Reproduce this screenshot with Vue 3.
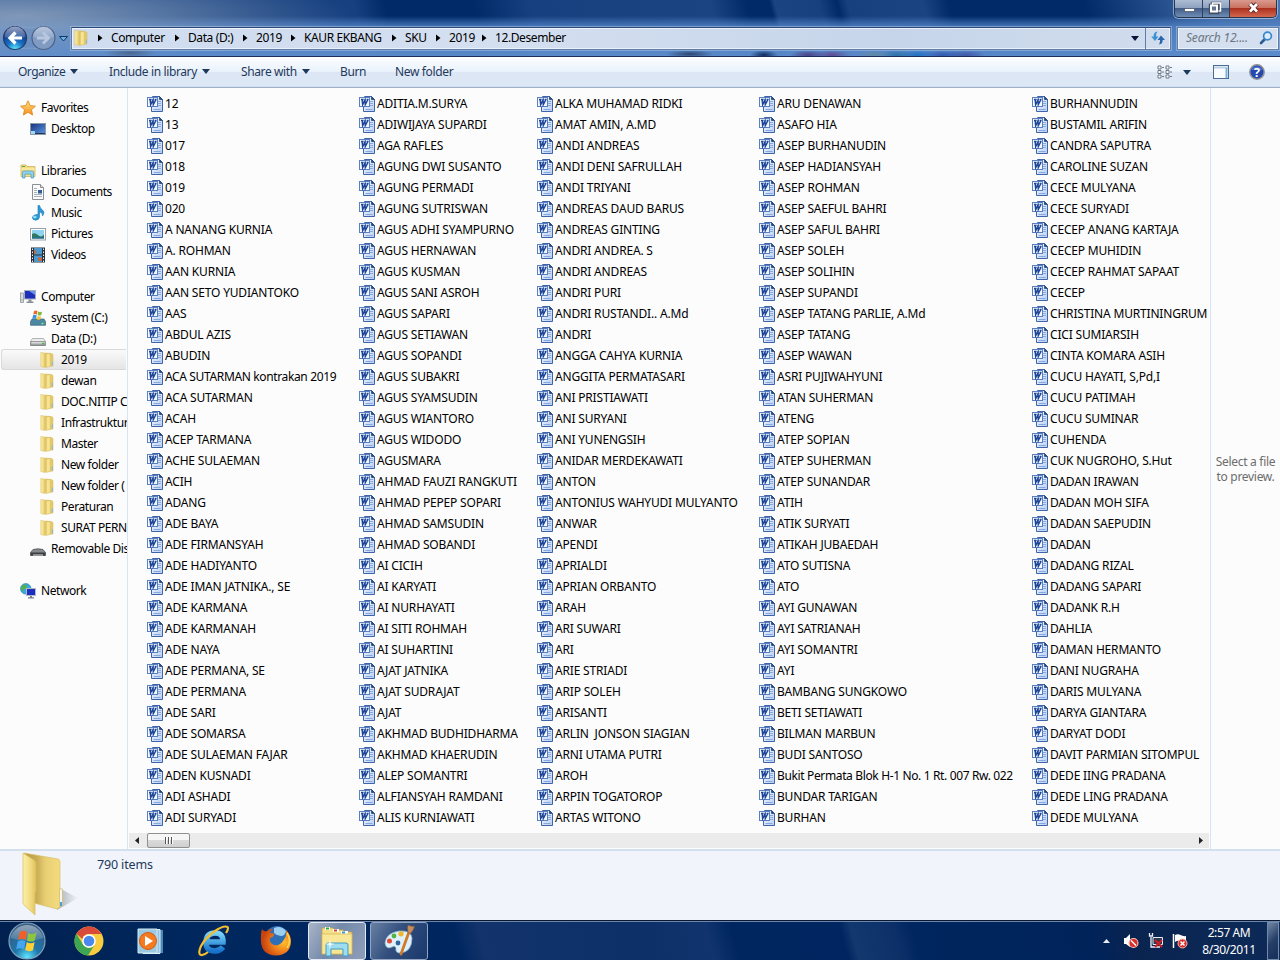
<script setup>
const columns = [
  ['12','13','017','018','019','020','A NANANG KURNIA','A. ROHMAN','AAN KURNIA','AAN SETO YUDIANTOKO','AAS','ABDUL AZIS','ABUDIN','ACA SUTARMAN kontrakan 2019','ACA SUTARMAN','ACAH','ACEP TARMANA','ACHE SULAEMAN','ACIH','ADANG','ADE BAYA','ADE FIRMANSYAH','ADE HADIYANTO','ADE IMAN JATNIKA., SE','ADE KARMANA','ADE KARMANAH','ADE NAYA','ADE PERMANA, SE','ADE PERMANA','ADE SARI','ADE SOMARSA','ADE SULAEMAN FAJAR','ADEN KUSNADI','ADI ASHADI','ADI SURYADI'],
  ['ADITIA.M.SURYA','ADIWIJAYA SUPARDI','AGA RAFLES','AGUNG DWI SUSANTO','AGUNG PERMADI','AGUNG SUTRISWAN','AGUS ADHI SYAMPURNO','AGUS HERNAWAN','AGUS KUSMAN','AGUS SANI ASROH','AGUS SAPARI','AGUS SETIAWAN','AGUS SOPANDI','AGUS SUBAKRI','AGUS SYAMSUDIN','AGUS WIANTORO','AGUS WIDODO','AGUSMARA','AHMAD FAUZI RANGKUTI','AHMAD PEPEP SOPARI','AHMAD SAMSUDIN','AHMAD SOBANDI','AI CICIH','AI KARYATI','AI NURHAYATI','AI SITI ROHMAH','AI SUHARTINI','AJAT JATNIKA','AJAT SUDRAJAT','AJAT','AKHMAD BUDHIDHARMA','AKHMAD KHAERUDIN','ALEP SOMANTRI','ALFIANSYAH RAMDANI','ALIS KURNIAWATI'],
  ['ALKA MUHAMAD RIDKI','AMAT AMIN, A.MD','ANDI ANDREAS','ANDI DENI SAFRULLAH','ANDI TRIYANI','ANDREAS DAUD BARUS','ANDREAS GINTING','ANDRI ANDREA. S','ANDRI ANDREAS','ANDRI PURI','ANDRI RUSTANDI.. A.Md','ANDRI','ANGGA CAHYA KURNIA','ANGGITA PERMATASARI','ANI PRISTIAWATI','ANI SURYANI','ANI YUNENGSIH','ANIDAR MERDEKAWATI','ANTON','ANTONIUS WAHYUDI MULYANTO','ANWAR','APENDI','APRIALDI','APRIAN ORBANTO','ARAH','ARI SUWARI','ARI','ARIE STRIADI','ARIP SOLEH','ARISANTI','ARLIN  JONSON SIAGIAN','ARNI UTAMA PUTRI','AROH','ARPIN TOGATOROP','ARTAS WITONO'],
  ['ARU DENAWAN','ASAFO HIA','ASEP BURHANUDIN','ASEP HADIANSYAH','ASEP ROHMAN','ASEP SAEFUL BAHRI','ASEP SAFUL BAHRI','ASEP SOLEH','ASEP SOLIHIN','ASEP SUPANDI','ASEP TATANG PARLIE, A.Md','ASEP TATANG','ASEP WAWAN','ASRI PUJIWAHYUNI','ATAN SUHERMAN','ATENG','ATEP SOPIAN','ATEP SUHERMAN','ATEP SUNANDAR','ATIH','ATIK SURYATI','ATIKAH JUBAEDAH','ATO SUTISNA','ATO','AYI GUNAWAN','AYI SATRIANAH','AYI SOMANTRI','AYI','BAMBANG SUNGKOWO','BETI SETIAWATI','BILMAN MARBUN','BUDI SANTOSO','Bukit Permata Blok H-1 No. 1 Rt. 007 Rw. 022','BUNDAR TARIGAN','BURHAN'],
  ['BURHANNUDIN','BUSTAMIL ARIFIN','CANDRA SAPUTRA','CAROLINE SUZAN','CECE MULYANA','CECE SURYADI','CECEP ANANG KARTAJA','CECEP MUHIDIN','CECEP RAHMAT SAPAAT','CECEP','CHRISTINA MURTININGRUM','CICI SUMIARSIH','CINTA KOMARA ASIH','CUCU HAYATI, S,Pd,I','CUCU PATIMAH','CUCU SUMINAR','CUHENDA','CUK NUGROHO, S.Hut','DADAN IRAWAN','DADAN MOH SIFA','DADAN SAEPUDIN','DADAN','DADANG RIZAL','DADANG SAPARI','DADANK R.H','DAHLIA','DAMAN HERMANTO','DANI NUGRAHA','DARIS MULYANA','DARYA GIANTARA','DARYAT DODI','DAVIT PARMIAN SITOMPUL','DEDE IING PRADANA','DEDE LING PRADANA','DEDE MULYANA'],
]
const tree = [
  [0, 'star', 'Favorites'], [1, 'desktop', 'Desktop'], null,
  [0, 'library', 'Libraries'], [1, 'doc', 'Documents'], [1, 'music', 'Music'], [1, 'picture', 'Pictures'], [1, 'video', 'Videos'], null,
  [0, 'computer', 'Computer'], [1, 'sysdrive', 'system (C:)'], [1, 'drive', 'Data (D:)'],
  [2, 'folder', '2019'], [2, 'folder', 'dewan'], [2, 'folder', 'DOC.NITIP C'], [2, 'folder', 'Infrastruktur'], [2, 'folder', 'Master'], [2, 'folder', 'New folder'], [2, 'folder', 'New folder ('], [2, 'folder', 'Peraturan'], [2, 'folder', 'SURAT PERN'],
  [1, 'removable', 'Removable Dis'], null, [0, 'network', 'Network'],
]
const crumbs = [['Computer', 77], ['Data (D:)', 68], ['2019', 48], ['KAUR EKBANG', 101], ['SKU', 44], ['2019', 46], ['12.Desember', 90]]
const tight = (name) => /[a-z]{3}/.test(name)
</script>

<template>
  <div class="screen">
    <svg class="defs" width="0" height="0" aria-hidden="true">
      <defs>
        <linearGradient id="gFold" x1="0" x2="1"><stop offset="0" stop-color="#fbf0a8"/><stop offset=".5" stop-color="#f3de86"/><stop offset="1" stop-color="#e0c25c"/></linearGradient>
        <linearGradient id="gBack" x1="0" x2="1"><stop offset="0" stop-color="#b99a3f"/><stop offset=".35" stop-color="#c9ac55"/><stop offset=".6" stop-color="#e9cf74"/><stop offset="1" stop-color="#f3dc7d"/></linearGradient>
        <linearGradient id="gBlue" x1="0" y1="0" x2="1" y2="1"><stop offset="0" stop-color="#16307a"/><stop offset="1" stop-color="#5d9be8"/></linearGradient>
        <linearGradient id="gGray" x1="0" y1="0" x2="0" y2="1"><stop offset="0" stop-color="#f2f2f2"/><stop offset="1" stop-color="#8c8f93"/></linearGradient>
        <linearGradient id="gPage" x1="0" y1="0" x2="1" y2="1"><stop offset="0" stop-color="#fff"/><stop offset="1" stop-color="#b5cdf3"/></linearGradient>
        <linearGradient id="gStar" x1="0" y1="0" x2="0" y2="1"><stop offset="0" stop-color="#ffe680"/><stop offset="1" stop-color="#f58a1f"/></linearGradient>
        <radialGradient id="gNav" cx=".5" cy="1" r=".8"><stop offset="0" stop-color="#5ff0ff"/><stop offset=".45" stop-color="#1971c4"/><stop offset="1" stop-color="#12347f"/></radialGradient>
        <linearGradient id="gShine" x1="0" y1="0" x2="0" y2="1"><stop offset="0" stop-color="#fff" stop-opacity=".75"/><stop offset="1" stop-color="#fff" stop-opacity=".2"/></linearGradient>
        <radialGradient id="gOrb" cx=".5" cy=".95" r=".85"><stop offset="0" stop-color="#5fe6ff"/><stop offset=".4" stop-color="#1d76ab"/><stop offset="1" stop-color="#385c82"/></radialGradient>
        <linearGradient id="gIe" x1="0" y1="0" x2="0" y2="1"><stop offset="0" stop-color="#79d2f8"/><stop offset="1" stop-color="#1673cc"/></linearGradient>
        <radialGradient id="gFox" cx=".75" cy=".5" r=".7"><stop offset="0" stop-color="#ffc02e"/><stop offset=".5" stop-color="#f07f1c"/><stop offset="1" stop-color="#c8430f"/></radialGradient>
      </defs>
      <symbol id="word" viewBox="0 0 16 16">
        <path d="M5.500.5h7l3 3v12h-11v-12z" fill="url(#gPage)" stroke="#3d64a8"/><path d="M12.500.5v3h3z" fill="#27487f" stroke="#27487f" stroke-width=".8"/>
        <path d="M11 5.500h3M11 7.500h3M11 9.500h3M6.500 13.500h7" stroke="#86a8df"/>
        <rect x=".5" y="1.500" width="10" height="9" fill="#f4f8ff" stroke="#5b80c2"/>
        <path d="M2 3.500h2.600M5.300 3.500h1.600M7.600 3.500h2M3.200 4l.5 4.600L6 4l.3 4.600L8.700 4" fill="none" stroke="#1e4697" stroke-width="1.500"/>
      </symbol>
      <symbol id="folder" viewBox="0 0 16 16">
        <path d="M5.500 1l6 .6 1.500 1v11.500l-7.500.5z" fill="#e6ca6a" stroke="#d4b75a" stroke-width=".5"/>
        <path d="M.8.500L5.300 1.200v14.300l-4.500-1z" fill="url(#gFold)" stroke="#dcc36c" stroke-width=".6"/>
        <path d="M6.300 2l4-.6v13l-4 1z" fill="#f6e493" stroke="#d4b75a" stroke-width=".5"/><path d="M12.300 9.500v4" stroke="#8fb9cc" stroke-width="1.200"/>
      </symbol>
      <symbol id="star" viewBox="0 0 16 16"><path d="M8 .8l2.200 4.800 5.200.6-3.900 3.500 1.100 5.300L8 12.300 3.400 15l1.100-5.300L.6 6.200l5.200-.6z" fill="url(#gStar)" stroke="#e08a1e" stroke-width=".9"/></symbol>
      <symbol id="desktop" viewBox="0 0 16 16"><rect x=".5" y="2.500" width="15" height="11" fill="url(#gBlue)" stroke="#8d98a8"/><path d="M1 12.500h14" stroke="#26374f"/><path d="M1 10h4v3H1z" fill="#9ad9f4"/></symbol>
      <symbol id="library" viewBox="0 0 16 16"><path d="M1 2h5l1 1.500h8v10H1z" fill="#f3dd83" stroke="#c9a951" stroke-width=".7"/><path d="M2 3.500h3" stroke="#4fae47"/><path d="M1 6h14" stroke="#fff3b3"/><path d="M2.500 15V9.500q0-1.500 1.500-1.500h8q1.500 0 1.500 1.500V15H11v-4H5v4z" fill="#8fd4ef" stroke="#4695be" stroke-width=".7"/></symbol>
      <symbol id="doc" viewBox="0 0 16 16"><path d="M2.500.5h8l3 3v12h-11z" fill="#fafafa" stroke="#8a8f96"/><path d="M10.500.5v3h3" fill="#ddd" stroke="#8a8f96"/><path d="M4 4.500h3M4 6.500h3M4 8.500h3M4 10.500h8M4 12.500h8" stroke="#a5b1bf"/><path d="M8 6h4v3.500H8z" fill="#2e5d96"/></symbol>
      <symbol id="music" viewBox="0 0 16 16"><path d="M8 .5h1.500q.5 3 3 4.500 3 2.500 0 6 .5-3.500-3-4v5q-.5 3.200-4 3.200-3.500-.5-3-3.200 1-2.800 5.500-2.500z" fill="#2a9bd8" stroke="#1c75b3" stroke-width=".6"/><ellipse cx="4.800" cy="12" rx="1.800" ry="1.200" fill="#8bdcf8"/></symbol>
      <symbol id="picture" viewBox="0 0 16 16"><rect x=".5" y="2.500" width="15" height="11.500" fill="#fff" stroke="#9aa0a8"/><path d="M2 4h12v8.500H2z" fill="#8fd2f1"/><path d="M2 8q3-2 6 1t6-.5v4H2z" fill="#2f7a5c"/><path d="M2 11h12v1.500H2z" fill="#2a6d94"/></symbol>
      <symbol id="video" viewBox="0 0 16 16"><rect x="1" y=".5" width="14" height="15" fill="#28313b"/><rect x="4" y="1" width="8" height="6.500" fill="#4a98ce"/><rect x="4" y="8.500" width="8" height="6.500" fill="#4a98ce"/><path d="M4 3l3 1.500L5 7H4zM8 10l4 1v3H8z" fill="#c26a43"/><path d="M2.500 1.500v14M13.500 1.500v14" stroke="#eee" stroke-dasharray="1.500 1.500"/></symbol>
      <symbol id="computer" viewBox="0 0 16 16"><rect x=".5" y="4" width="3" height="9.500" fill="#d5dae0" stroke="#838a92" stroke-width=".7"/><path d="M1.500 11h1" stroke="#48b648"/><rect x="4.500" y="1.500" width="11" height="8.500" fill="#1d2fb8" stroke="#a9adba"/><path d="M9 2h6v4z" fill="#6d8ff0"/><path d="M8.500 10.500h3v2h2v1.500h-7v-1.500h2z" fill="#8a9099"/></symbol>
      <symbol id="drive" viewBox="0 0 16 16"><path d="M2.500 7.500h11l2 3v4H.5v-4z" fill="#ececec" stroke="#a0a3a7" stroke-width=".8"/><path d="M.8 10.500h14.400v3.900H.8z" fill="url(#gGray)" stroke="#777" stroke-width=".7"/><path d="M12 12.500h2" stroke="#39c23d" stroke-width="1.500"/></symbol>
      <symbol id="sysdrive" viewBox="0 0 16 16"><path d="M2 9h12l1.500 2.500v3.800H.5v-3.800z" fill="#4b86a3" stroke="#466779" stroke-width=".7"/><path d="M11.500 13.500h2" stroke="#7ef36f" stroke-width="1.500"/><path d="M4 1q2-1 3.500 0L7 4.500Q5 3.600 3.300 4.500z" fill="#ea6b2d"/><path d="M8.200 1.500q1.800 1 3.800 0L11.300 5q-2 1-3.600 0z" fill="#7fba3a"/><path d="M3 5.300q2-.9 3.700 0L6 9Q4 8 2.300 9z" fill="#3b93db"/><path d="M7.500 5.900q2 1 3.600 0l-.7 3.300q-2 1-3.600 0z" fill="#f8c62f"/></symbol>
      <symbol id="removable" viewBox="0 0 16 16"><path d="M3 8.500q5-1.500 10 0l2.500 3v3H.5v-3z" fill="#85888c" stroke="#444" stroke-width=".7"/><path d="M.8 11.500h14.400v3H.8z" fill="#3b3e42"/><path d="M3 14h10" stroke="#ddd"/></symbol>
      <symbol id="network" viewBox="0 0 16 16"><circle cx="5.800" cy="5.800" r="5.300" fill="#3ba7dc" stroke="#2379a9" stroke-width=".6"/><path d="M3 1.800q4-1 4 1.200T4 6.500 3.800 10Q1 8 .8 5z" fill="#52b04f"/><rect x="6.500" y="5.500" width="9" height="7" fill="#1c2fc0" stroke="#b5bac7"/><path d="M10 13h2v1.300h2V15.500H8v-1.200h2z" fill="#7b8088"/></symbol>
      <symbol id="flag" viewBox="0 0 20 20"><path d="M4 2.500q3.500-2 6 .2L9 9Q6 7.200 2.500 9z" fill="#f0602a"/><path d="M11 3.300q3.500 1.700 7-.3L16.500 9.500q-3.500 2-6.500 0z" fill="#8cc63e"/><path d="M2.300 10.200q3.500-1.800 6.500 0L7.500 17Q4.500 15.200 1 17z" fill="#45a5ee"/><path d="M9.800 10.900q3 2 6.500.1L15 17.700q-3.500 1.700-6.500-.1z" fill="#ffd035"/></symbol>
    </svg>

    <header class="glass">
      <div class="caption">
        <div class="winbtns">
          <span class="wb min"><svg width="28" height="17" viewBox="0 0 28 17"><rect x="9.500" y="8.500" width="10" height="3" fill="#fff" stroke="#4c5a70" stroke-width=".8"/></svg></span>
          <span class="wb max"><svg width="26" height="17" viewBox="0 0 26 17"><path d="M9.500 3.500h7v7h-7z" fill="none" stroke="#414e63" stroke-width="3.400"/><path d="M7.500 5.500h7v7h-7z" fill="none" stroke="#414e63" stroke-width="3.400"/><path d="M9.500 5V3h8v8h-2" fill="none" stroke="#fff" stroke-width="1.500"/><path d="M8 5.500h6v6H8z" fill="#65758f" stroke="#fff" stroke-width="2"/></svg></span>
          <span class="wb close"><svg width="47" height="17" viewBox="0 0 47 17"><path d="M20 3.800l7 8M27 3.800l-7 8" stroke="#5e2420" stroke-width="4.600"/><path d="M20 4l7 7.600M27 4l-7 7.600" stroke="#fff" stroke-width="2.800"/></svg></span>
        </div>
      </div>
      <div class="addrrow">
        <svg class="nav" width="70" height="28" viewBox="0 0 70 28">
          <path d="M15 2q14 4 28 0a12 12 0 0 1 0 24q-14-4-28 0z" fill="#6c8dbd" fill-opacity=".5" stroke="#8ba5cc" stroke-width=".7"/>
          <circle cx="15" cy="14" r="11.500" fill="url(#gNav)" stroke="#243c6b" stroke-width="1.200"/><path d="M4.500 13a10.500 10.500 0 0 1 21 0q-10 3-21 0z" fill="url(#gShine)" opacity=".75"/>
          <path d="M15.500 8.500L10 14l5.500 5.500M10.500 14H22" fill="none" stroke="#fff" stroke-width="3.200"/>
          <circle cx="43.500" cy="14" r="11.500" fill="#809bc2" stroke="#4a6087" stroke-width="1.200"/><path d="M33 13a10.500 10.500 0 0 1 21 0q-10 3-21 0z" fill="url(#gShine)" opacity=".6"/>
          <path d="M43 8.500l5.500 5.500-5.500 5.500M48 14H37" fill="none" stroke="#b9c7de" stroke-width="2.800"/>
          <path d="M59.500 12.500h8L63.500 17z" fill="#69b2e6" stroke="#123764"/>
        </svg>
        <div class="address">
          <svg class="i16" width="16" height="16"><use href="#folder"/></svg>
          <div class="crumbs">
            <span v-for="(c, i) in crumbs" :key="i" class="crumb" :style="{ width: c[1] + 'px' }"><svg width="5" height="8"><path d="M0 .5L4.500 4 0 7.500z" fill="#000"/></svg>{{ c[0] }}</span>
          </div>
          <svg class="drop" width="8" height="5"><path d="M0 0h8L4 5z" fill="#0b1438"/></svg>
          <span class="refresh"><svg width="16" height="16" viewBox="0 0 16 16"><path d="M7.500 1.500Q3.200 2 3.700 6.500H1.200L5 11l3.500-4.500H6.200Q5.800 3.500 7.500 1.500z" fill="#3b93d6"/><path d="M9 14.500q4-.5 3.600-4.500H15l-4-4.500L7.500 10H10q.4 2.500-1 4.500z" fill="#2b66b2"/></svg></span>
        </div>
        <div class="search"><span>Search 12....</span><svg width="14" height="14" viewBox="0 0 14 14"><path d="M6 8L2 12" stroke="#2c5c93" stroke-width="2.600" stroke-linecap="round"/><circle cx="8.500" cy="5" r="3.900" fill="#dcecfb" stroke="#3a86c8" stroke-width="1.700"/></svg></div>
      </div>
    </header>

    <div class="toolbar">
      <span class="t t1">Organize <svg width="8" height="5"><path d="M0 0h8L4 5z"/></svg></span>
      <span class="t t2">Include in library <svg width="8" height="5"><path d="M0 0h8L4 5z"/></svg></span>
      <span class="t t3">Share with <svg width="8" height="5"><path d="M0 0h8L4 5z"/></svg></span>
      <span class="t t4">Burn</span>
      <span class="t t5">New folder</span>
      <div class="tools">
        <svg width="16" height="14" viewBox="0 0 16 14"><g fill="#fff" stroke="#5f6b7c" stroke-width=".9"><path d="M1 1h3v3H1zM1 5.500h3v3H1zM1 10h3v3H1zM9 1h3v3H9zM9 5.500h3v3H9zM9 10h3v3H9z"/><path d="M5 2.500h2M5 7h2M5 11.500h2M13 2.500h2M13 7h2M13 11.500h2"/></g></svg>
        <svg class="vd" width="8" height="5"><path d="M0 0h8L4 5z" fill="#1e395b"/></svg>
        <svg class="pane" width="16" height="14" viewBox="0 0 16 14"><rect x=".5" y=".5" width="15" height="13" fill="#f9fcff" stroke="#4d6c91"/><path d="M1 2.500h14" stroke="#bdd1e6" stroke-width="2"/><path d="M13.500 3v10" stroke="#79b4d8" stroke-width="2"/></svg>
        <svg class="help" width="16" height="16" viewBox="0 0 16 16"><circle cx="8" cy="8" r="7.200" fill="#2348ae" stroke="#8f9399" stroke-width="1.500"/><path d="M2.500 6a6 6 0 0 1 11 0z" fill="#6e91de" opacity=".6"/><text x="8" y="12.500" text-anchor="middle" font-size="12.500" font-weight="700" fill="#fff">?</text></svg>
      </div>
    </div>

    <main class="body">
      <nav class="side">
        <div v-for="(n, i) in tree" :key="i" class="node" :class="[n ? 'lv' + n[0] : 'gap', { sel: i === 12 }]">
          <template v-if="n"><svg class="i16" width="16" height="16"><use :href="'#' + n[1]"/></svg><span>{{ n[2] }}</span></template>
        </div>
      </nav>
      <section class="files">
        <div class="grid">
          <div v-for="(col, c) in columns" :key="c" class="col">
            <div v-for="f in col" :key="f" class="file" :class="{ tight: tight(f) }"><svg class="i16" width="16" height="16"><use href="#word"/></svg><span>{{ f }}</span></div>
          </div>
        </div>
        <div class="scroll">
          <svg width="4" height="7"><path d="M4 0v7L0 3.500z" fill="#222"/></svg>
          <div class="thumb"><i></i><i></i><i></i></div>
          <svg class="rt" width="4" height="7"><path d="M0 0v7l4-3.500z" fill="#222"/></svg>
        </div>
      </section>
      <aside class="preview">Select a file<br>to preview.</aside>
    </main>

    <footer class="details">
      <svg width="62" height="66" viewBox="0 0 62 66">
        <defs><linearGradient id="gSh" x1="0" x2="1"><stop offset="0" stop-color="#777b85" stop-opacity=".6"/><stop offset="1" stop-color="#777b85" stop-opacity="0"/></linearGradient></defs>
        <path d="M39 36l19 10-21 12z" fill="url(#gSh)"/>
        <path d="M4 1l34 6q2 .5 2 3v45l-3 2-23-6z" fill="url(#gBack)" stroke="#d8be66" stroke-width=".7"/>
        <path d="M39.500 37h3v17h-3z" fill="#f5f5ee" stroke="#cfb45b" stroke-width=".6"/><path d="M41 50v4" stroke="#48a0dd" stroke-width="2"/>
        <path d="M3 1l11 7q2 1 2 4v27l-1 2v22L4 53q-1-1-1-3z" fill="url(#gFold)" stroke="#d8bd62" stroke-width=".7"/>
      </svg>
      <span>790 items</span>
    </footer>

    <div class="taskbar">
      <svg class="orb" width="40" height="40" viewBox="0 0 40 40"><circle cx="20" cy="20" r="18" fill="url(#gOrb)" stroke="#7da2bd" stroke-width="1.200"/><path d="M3.500 17a17 17 0 0 1 33 0q-16 6-33 0z" fill="url(#gShine)" opacity=".6"/><use href="#flag" x="8" y="8" width="24" height="24"/></svg>
      <svg class="chrome" width="30" height="30" viewBox="0 0 30 30"><circle cx="15" cy="15" r="14.500" fill="#f9cc3f"/><path d="M2.500 7.700A14.500 14.500 0 0 1 27.600 8H15a7 7 0 0 0-6.700 5z" fill="#d94a3b"/><path d="M2.500 7.700A14.500 14.500 0 0 0 14 29.500L20.500 19a7 7 0 0 1-11.800-1z" fill="#3da652"/><circle cx="15" cy="15" r="6.800" fill="#fff"/><circle cx="15" cy="15" r="5.300" fill="#4a87ee"/></svg>
      <svg class="wmp" width="28" height="28" viewBox="0 0 28 28"><path d="M8 3h18v23H8z" fill="#4d88b5"/><path d="M6 2.500h17v24H6z" fill="#92c4df" stroke="#e1f3fb"/><path d="M1 2h19v24H1z" fill="#9bc9e2" stroke="#d4ecf7"/><circle cx="11" cy="14" r="8.500" fill="#f47b20" stroke="#d45c12"/><path d="M8 9l8 5-8 5z" fill="#fff"/></svg>
      <svg class="ie" width="34" height="32" viewBox="0 0 34 32"><path d="M11 17h15Q26.500 8 18 8T9 17t9 9q5 0 8-4" fill="none" stroke="url(#gIe)" stroke-width="5.500"/><path d="M29 8q3-4.500 1.500-6Q27 0 18 6T4 21q-3.500 8 0 9 3 .5 7-3" fill="none" stroke="#f3bd2f" stroke-width="2.200"/></svg>
      <svg class="fox" width="32" height="32" viewBox="0 0 32 32"><circle cx="17" cy="13" r="12" fill="#2f6fb5"/><path d="M14 3q7-3 12 3-1 5-5 5T14 8z" fill="#9ccff0"/><path d="M2 4q1 2 4 2.500Q9 3.500 13 4q-3 2-3 4 3 0 4.500 1-1 3-4.500 4-1 5 4 7 6 1 9-4 4-5 3-11 5 5 5 12Q30 30 16 30.500 2 30 1 17 .5 9 2 4z" fill="url(#gFox)"/><path d="M27 8q5 8 0 15" fill="none" stroke="#ffd44f" stroke-width="1.500"/></svg>
      <div class="task on"><svg width="34" height="32" viewBox="0 0 34 32"><path d="M2 6V3h11l1 2h9l1 2h8v22H2z" fill="#f4de86" stroke="#c0a14a" stroke-width=".8"/><path d="M5 3.500h5M13 5.500h6M21 7.500h7" stroke="#fff" stroke-width="3"/><path d="M6 3.500h3" stroke="#2ca83d" stroke-width="2"/><path d="M14 5.500h3" stroke="#d13e2b" stroke-width="2"/><path d="M22 7.500h3" stroke="#3496d8" stroke-width="2"/><path d="M2 9h30v20H2z" fill="#f7e796" stroke="#d2b558" stroke-width=".7"/><path d="M6 31V20q0-2 2-2h18q2 0 2 2v11h-5v-7H11v7z" fill="#9edcf0" stroke="#3e9dc4"/><path d="M10 14l.7 4.300L15 19l-4.300.7L10 24l-.7-4.300L5 19l4.300-.7z" fill="#fff"/></svg></div>
      <div class="task"><svg width="34" height="34" viewBox="0 0 34 34"><path d="M3 19Q4 9 17 7q12-1 13 7 0 14-12 15-5 0-4-5-1-3-4-1Q4 26 3 19z" fill="#dff1fa" stroke="#86b4ce" stroke-width=".8"/><circle cx="7.500" cy="17" r="2.500" fill="#e34a39"/><circle cx="12" cy="12" r="2.400" fill="#54b247"/><circle cx="19" cy="9.800" r="2.600" fill="#f1b52a"/><circle cx="16" cy="19" r="2.400" fill="#2e639b"/><path d="M27 8L19 30" stroke="#d07a2c" stroke-width="2.800" stroke-linecap="round"/><path d="M26 8.500q-1-5 0-7.500 3 1.500 6.500 1.500-1 4-4 7z" fill="#c28d62" stroke="#8a5526" stroke-width=".5"/></svg></div>
      <div class="tray">
        <svg width="7" height="4"><path d="M0 4h7L3.500 0z" fill="#e8edf5"/></svg>
        <svg class="snd" width="16" height="16" viewBox="0 0 16 16"><path d="M1 5h2l4-4v13l-4-3H1z" fill="#fff"/><circle cx="10.500" cy="10" r="4.500" fill="#d92d27" stroke="#f6c0bb" stroke-width="1.100"/><path d="M8 7.500l5 5" stroke="#fff" stroke-width="1.400"/></svg>
        <svg class="net" width="16" height="16" viewBox="0 0 16 16"><path d="M5 4.500h9.500v7H5z" fill="#2b3950" stroke="#e8edf3"/><path d="M1.500 0v3h3V0M1 3h4M3 4v10h9" fill="none" stroke="#eef2f8" stroke-width="1.300"/><path d="M7 7l7 7M14 7l-7 7" stroke="#cf1b24" stroke-width="2"/></svg>
        <svg class="act" width="16" height="16" viewBox="0 0 16 16"><path d="M1.500 1v14" stroke="#fff" stroke-width="1.500"/><path d="M3 2q3-1.500 5.500 0T14 3v6q-3 1-5.500-.5T3 9z" fill="#fff"/><circle cx="10.500" cy="10.500" r="4.500" fill="#d92d27" stroke="#f3b8b4"/><path d="M8.500 8.500l4 4M12.500 8.500l-4 4" stroke="#fff" stroke-width="1.500"/></svg>
        <div class="clock">2:57 AM<br>8/30/2011</div>
        <div class="peek"></div>
      </div>
    </div>
  </div>
</template>

<style>
html, body { margin: 0; overflow: hidden; }
</style>
<style scoped>
.screen { width: 1280px; height: 960px; display: flex; flex-direction: column; overflow: hidden; font: 12px/16px "Noto Sans", "Open Sans", sans-serif; color: #000; background: #fcfcfc; }
.defs { position: absolute; }
.i16 { flex: none; display: block; }
.glass { height: 57px; flex: none; box-sizing: border-box; border-bottom: 1px solid #1d2f57;
  background:
    radial-gradient(ellipse 14px 5px at 764px 55px, #0d2a5c, transparent),
    radial-gradient(ellipse 24px 4px at 690px 54px, #2d456e, transparent),
    radial-gradient(ellipse 18px 5px at 808px 55px, #4c4086, transparent),
    radial-gradient(ellipse 18px 5px at 832px 55px, #5e4a92, transparent),
    radial-gradient(ellipse 18px 5px at 874px 55px, #6089a4, transparent),
    radial-gradient(ellipse 18px 5px at 897px 55px, #2a72a8, transparent),
    radial-gradient(ellipse 18px 5px at 918px 55px, #1f71c4, transparent),
    radial-gradient(ellipse 22px 5px at 943px 55px, #3157b0, transparent),
    radial-gradient(ellipse 20px 5px at 966px 55px, #4057a8, transparent),
    radial-gradient(ellipse 26px 5px at 130px 53px, #4a668f, transparent),
    radial-gradient(ellipse 330px 46px at 20px 16px, rgba(150,170,195,.8), rgba(120,150,190,0)),
    linear-gradient(180deg, rgba(80,130,200,0) 16px, rgba(83,132,199,.85) 27px, rgba(93,141,205,.95) 56px),
    linear-gradient(75deg, #2a5390 0, #1b4482 250px, #174080 355px, #002a68 385px, #002a68 470px, #174080 525px, #1b4482 700px, #002a68 735px, #002a68 757px, #1b4482 762px, #17407f 805px, #002a68 822px, #17407f 832px, #1b4482 905px, #002a68 930px, #002a68 1060px, #3c66a2 1180px, #4a74ae 1250px); }
.caption { height: 24px; display: flex; justify-content: flex-end; padding-right: 3px; }
.winbtns { height: 17px; display: flex; border: 1px solid #26364f; border-top: 0; border-radius: 0 0 5px 5px; overflow: hidden; box-shadow: 0 0 0 1px rgba(190,210,235,.65); }
.wb { height: 17px; box-sizing: border-box; border-right: 1px solid #31415a; background: linear-gradient(#adbdd3 0, #8ca1c0 8px, #405b86 8px, #6f8db4 17px); }
.wb svg { display: block; }
.min { width: 28px; } .max { width: 27px; }
.close { width: 46px; border: 0; background: linear-gradient(#d99a8e 0, #c9705f 8px, #aa2e1d 8px, #d4674f 17px); }
.addrrow { height: 28px; display: flex; align-items: center; }
.nav { flex: none; }
.address { width: 1100px; height: 23px; box-sizing: border-box; border: 1px solid #5f7da9; border-top-color: #2c4877; margin-left: 1px; display: flex; align-items: center; background: linear-gradient(90deg, #cfdcef, #d4dff0 40%, #c6d5ea 75%, #d1dded); box-shadow: inset 0 0 0 1px rgba(255,255,255,.6), 0 0 0 1px rgba(190,208,233,.45); padding-left: 2px; flex: none; }
.crumbs { display: flex; flex: 1; margin-left: 8px; letter-spacing: -.4px; }
.crumb { display: flex; align-items: center; white-space: nowrap; flex: none; }
.crumb svg { margin-right: 8px; flex: none; }
.drop { margin-right: 6px; }
.refresh { width: 24px; height: 21px; border-left: 1px solid #5f7da9; display: flex; align-items: center; justify-content: center; }
.search { width: 102px; height: 23px; box-sizing: border-box; margin: 0 0 0 6px; border: 1px solid #5f7da9; background: #d4dfef; box-shadow: inset 0 0 0 1px rgba(255,255,255,.6), 0 0 0 1px rgba(190,208,233,.45); display: flex; align-items: center; justify-content: space-between; padding: 0 5px 0 8px; font-style: italic; color: #6d7681; white-space: nowrap; letter-spacing: -.2px; }
.toolbar { height: 31px; flex: none; box-sizing: border-box; border-bottom: 1px solid #a0afc8; border-top: 1px solid #fff; background: linear-gradient(#fbfdff 0, #e8f1fb 14px, #dce6f4 14px, #dde8f6 28px, #c9d5e6 29px); display: flex; align-items: center; color: #1e395b; padding: 0 0 1px 18px; }
.t { white-space: nowrap; flex: none; letter-spacing: -.38px; }
.t svg { margin: 0 0 2px 2px; fill: #1e395b; }
.t1 { width: 91px; letter-spacing: -.5px; } .t2 { width: 132px; } .t3 { width: 99px; } .t4 { width: 55px; } .t5 { letter-spacing: -.35px; }
.tools { margin-left: auto; display: flex; align-items: center; padding-right: 15px; }
.vd { margin: 0 22px 0 10px; } .help { margin-left: 20px; }
.body { height: 761px; flex: none; display: flex; }
.side { width: 127px; flex: none; border-right: 1px solid #d6e5f5; margin-right: 1px; overflow: hidden; padding-top: 9px; height: 752px; letter-spacing: -.42px; }
.node { width: 127px; height: 21px; display: flex; align-items: center; gap: 5px; white-space: nowrap; box-sizing: border-box; }
.lv0 { padding-left: 20px; } .lv1 { padding-left: 30px; } .lv2 { padding-left: 40px; }
.node.sel { width: 125px; border: 1px solid #d9d9d9; border-right: 0; border-radius: 3px 0 0 3px; margin-left: 1px; padding-left: 38px; background: linear-gradient(#fafafa, #e5e5e5); }
.files { width: 1082px; flex: none; overflow: hidden; border-right: 1px solid #d6e5f5; box-sizing: border-box; }
.grid { display: grid; grid-template-columns: 212px 178px 222px 273px 180px; padding: 5px 0 0 18px; height: 740px; }
.file { height: 21px; display: flex; align-items: center; gap: 2px; white-space: pre; letter-spacing: -.18px; }
.file.tight { letter-spacing: -.36px; }
.scroll { height: 15px; background: #ebebeb; display: flex; align-items: center; padding: 0 6px 0 6px; margin-right: 1px; }
.thumb { width: 43px; height: 15px; box-sizing: border-box; margin-left: 8px; border: 1px solid #8f8f8f; border-radius: 2px; background: linear-gradient(#f6f6f6 50%, #dadada 50%, #d0d0d0); display: flex; justify-content: center; align-items: center; gap: 1px; }
.thumb i { width: 1px; height: 7px; background: #555; border-right: 1px solid #fff; }
.rt { margin-left: auto; }
.preview { flex: 1; display: flex; align-items: center; justify-content: center; text-align: center; line-height: 15px; color: #6d6d6d; letter-spacing: -.3px; white-space: nowrap; }
.details { height: 71px; flex: none; box-sizing: border-box; border-top: 2px solid #d3e1ef; background: #f1f5fb; display: flex; color: #1e395b; padding: 1px 0 0 20px; font-size: 12.500px; letter-spacing: -.15px; }
.details svg { flex: none; }
.details span { margin: 5px 0 0 15px; }
.taskbar { height: 40px; flex: none; box-sizing: border-box; border-top: 1px solid #0c1730; box-shadow: inset 0 1px 0 #6b87ae; background: linear-gradient(75deg, #01204f 0, #00285f 200px, #00265f 445px, #12336c 470px, #0d3069 630px, #11346e 690px, #00265f 715px, #002560 820px, #12386f 830px, #0d3069 870px, #00265f 890px, #00235a 1060px, #0a2450 1100px, #0d2a58 1250px); display: flex; align-items: center; padding-left: 7px; }
.taskbar > svg { flex: none; }
.chrome { margin-left: 27px; } .wmp { margin-left: 33px; } .ie { margin-left: 32px; } .fox { margin: 0 16px 0 29px; }
.task { width: 58px; height: 38px; box-sizing: border-box; border: 1px solid #93a5c0; border-radius: 3px; margin-right: 4px; background: linear-gradient(120deg, #6880a4, #314e7d 45%, #19386c); display: flex; align-items: center; justify-content: center; flex: none; }
.task.on { border-color: #e3e9f2; background: linear-gradient(120deg, #a9b5c8, #7489aa 45%, #8f9fba); }
.tray { margin-left: auto; display: flex; align-items: center; height: 38px; color: #fff; }
.snd { margin-left: 13px; } .net { margin-left: 9px; } .act { margin-left: 8px; }
.clock { width: 76px; text-align: center; line-height: 17px; margin-left: 3px; white-space: nowrap; letter-spacing: -.4px; }
.peek { width: 12px; height: 38px; box-sizing: border-box; border: 1px solid #7289aa; background: linear-gradient(135deg, #7387a5, #263f68 50%, #142f5a); margin-right: 1px; }
</style>
